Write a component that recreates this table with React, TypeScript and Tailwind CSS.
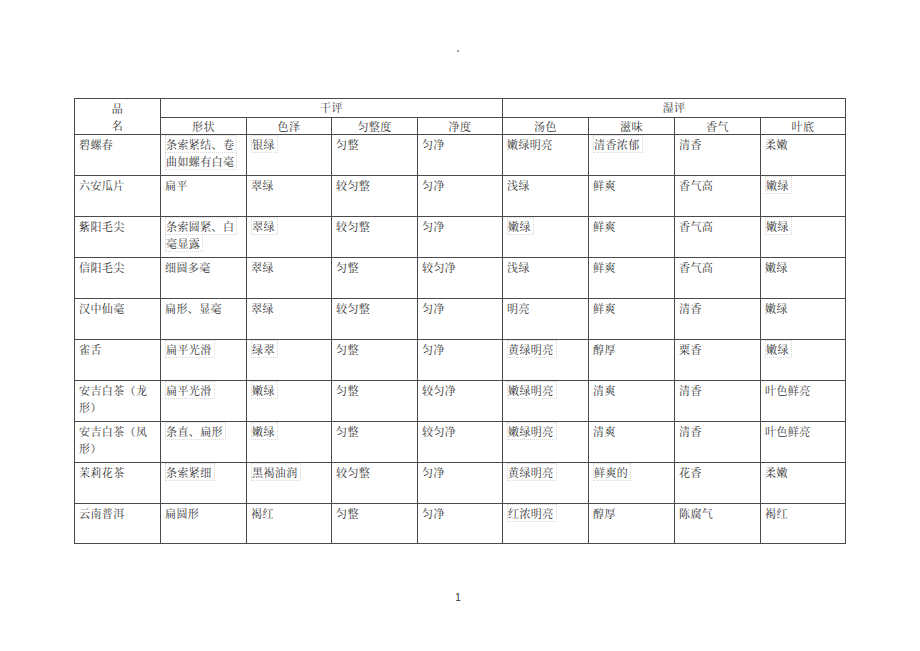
const subHeads = ["形状", "色泽", "匀整度", "净度", "汤色", "滋味", "香气", "叶底"];

// cells marked with "|" get the faint dotted outline seen in the scan
const rows: string[][] = [
  ["碧螺春", "|条索紧结、卷\n|曲如螺有白毫", "|银绿", "匀整", "匀净", "嫩绿明亮", "|清香浓郁", "清香", "柔嫩"],
  ["六安瓜片", "扁平", "翠绿", "较匀整", "匀净", "浅绿", "鲜爽", "香气高", "|嫩绿"],
  ["紫阳毛尖", "|条索圆紧、白\n|毫显露", "|翠绿", "较匀整", "匀净", "|嫩绿", "鲜爽", "香气高", "|嫩绿"],
  ["信阳毛尖", "细圆多毫", "翠绿", "匀整", "较匀净", "浅绿", "鲜爽", "香气高", "嫩绿"],
  ["汉中仙毫", "扁形、显毫", "翠绿", "较匀整", "匀净", "明亮", "鲜爽", "清香", "嫩绿"],
  ["雀舌", "|扁平光滑", "|绿翠", "匀整", "匀净", "|黄绿明亮", "醇厚", "粟香", "|嫩绿"],
  ["安吉白茶（龙\n形）", "|扁平光滑", "|嫩绿", "匀整", "较匀净", "|嫩绿明亮", "清爽", "清香", "叶色鲜亮"],
  ["安吉白茶（凤\n形）", "|条直、扁形", "|嫩绿", "匀整", "较匀净", "|嫩绿明亮", "清爽", "清香", "叶色鲜亮"],
  ["茉莉花茶", "|条索紧细", "|黑褐油润", "较匀整", "匀净", "|黄绿明亮", "|鲜爽的", "花香", "柔嫩"],
  ["云南普洱", "扁圆形", "褐红", "匀整", "匀净", "|红浓明亮", "醇厚", "陈腐气", "褐红"],
];

const colWidths = [86, 86, 85, 86, 85, 86, 86, 86, 85];

function CellText({ text }: { text: string }) {
  return (
    <>
      {text.split("\n").map((line, i) => {
        const boxed = line.startsWith("|");
        const t = boxed ? line.slice(1) : line;
        return (
          <div key={i} className="leading-[17px]">
            <span
              className={
                boxed ? "border border-dotted border-[#dadada] pr-[2px]" : ""
              }
            >
              {t}
            </span>
          </div>
        );
      })}
    </>
  );
}

export default function App() {
  return (
    <div
      className="relative h-[651px] w-[920px] bg-white text-[#333]"
      style={{ fontFamily: '"Noto Serif CJK SC", "Noto Sans CJK SC", serif' }}
    >
      <div className="flex justify-center pt-[50px]">
        <span className="ml-[-4px] h-[2px] w-[2px] bg-[#a0a0a0]" />
      </div>

      <div className="pl-[74px] pt-[46px]">
        <table className="table-fixed border-collapse text-[11px] tracking-[0.4px]">
          <colgroup>
            {colWidths.map((w, i) => (
              <col key={i} style={{ width: w }} />
            ))}
          </colgroup>
          <thead>
            <tr className="h-[18px]">
              <th
                rowSpan={2}
                className="border border-[#4a4a4a] p-0 text-center align-top font-normal"
              >
                <div className="leading-[17px] pt-[1px]">品</div>
                <div className="leading-[17px]">名</div>
              </th>
              <th
                colSpan={4}
                className="border border-[#4a4a4a] p-0 text-center font-normal leading-[17px]"
              >
                干评
              </th>
              <th
                colSpan={4}
                className="border border-[#4a4a4a] p-0 text-center font-normal leading-[17px]"
              >
                湿评
              </th>
            </tr>
            <tr className="h-[17px]">
              {subHeads.map((h) => (
                <th
                  key={h}
                  className="border border-[#4a4a4a] p-0 text-center font-normal leading-[16px]"
                >
                  {h}
                </th>
              ))}
            </tr>
          </thead>
          <tbody>
            {rows.map((r, ri) => (
              <tr key={ri} className={ri === rows.length - 1 ? "h-[40px]" : "h-[41px]"}>
                {r.map((c, ci) => (
                  <td
                    key={ci}
                    className="border border-[#4a4a4a] px-[4px] pt-[1px] align-top whitespace-nowrap"
                  >
                    <CellText text={c} />
                  </td>
                ))}
              </tr>
            ))}
          </tbody>
        </table>
      </div>

      <div className="flex justify-center pt-[49px]">
        <span
          className="ml-[-4px] text-[10px] leading-none text-[#333]"
          style={{ fontFamily: '"Liberation Sans", sans-serif' }}
        >
          1
        </span>
      </div>
    </div>
  );
}
